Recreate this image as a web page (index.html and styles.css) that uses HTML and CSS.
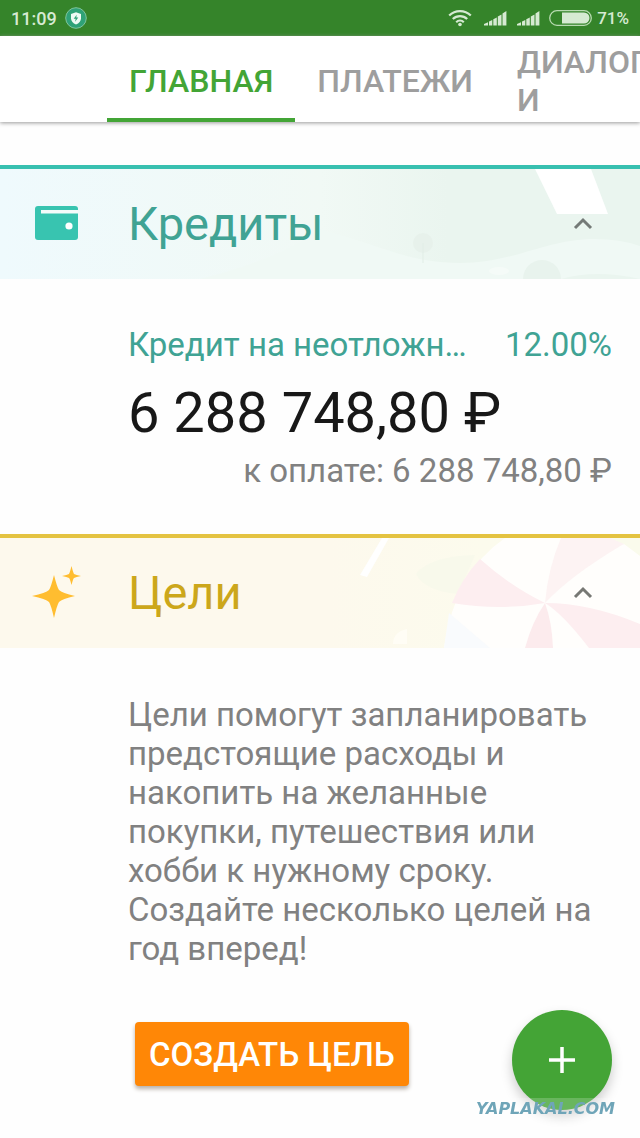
FILE: index.html
```html
<!DOCTYPE html>
<html lang="ru">
<head>
<meta charset="utf-8">
<meta name="viewport" content="width=device-width, initial-scale=1">
<title>Главная</title>
<link rel="stylesheet" href="styles.css">
</head>
<body>
<div class="status">
  <span class="time">11:09</span>
  <svg class="shield" width="22" height="22" viewBox="0 0 22 22" aria-hidden="true">
    <circle cx="11" cy="11" r="10.3" fill="#2fa277" stroke="#7fc39c"/>
    <path d="M11 5.2l5 1.8v4.2c0 3-2 5-5 6.2c-3-1.2-5-3.200-5-6.200V7z" fill="#effaf4"/>
    <path d="M11.700 7.800l-3 4h2l-.6 3l3.200-4.200h-2z" fill="#2fa277"/>
  </svg>
  <span class="spacer"></span>
  <svg class="wifi" width="24" height="18" viewBox="0 0 24 18" fill="none" stroke="#d6ead2" stroke-width="2.200" aria-hidden="true">
    <path d="M1.200 6.500a15.500 15.500 0 0 1 21.600 0M4.800 10a10.300 10.300 0 0 1 14.400 0M8.200 13.200a5.500 5.500 0 0 1 7.600 0"/>
    <circle cx="12" cy="15.500" r="1.800" fill="#d6ead2" stroke="none"/>
  </svg>
  <svg class="signal" width="23" height="16" viewBox="0 0 23 16" fill="#d6ead2" aria-hidden="true">
    <path d="M0 15.500V14l4-1.800v3.300zM5 15.500v-4l3.300-1.600v5.600zM9.300 15.500V9.300l3.500-1.800v8zM13.800 15.500V6.500l3.700-2v11zM18.500 15.500V3.500L22.400 1v14.500z"/>
  </svg>
  <svg class="signal" width="23" height="16" viewBox="0 0 23 16" fill="#d6ead2" aria-hidden="true">
    <path d="M0 15.500V14l4-1.800v3.300zM5 15.500v-4l3.300-1.600v5.600zM9.300 15.500V9.300l3.500-1.800v8zM13.800 15.500V6.500l3.700-2v11zM18.500 15.500V3.500L22.400 1v14.500z"/>
  </svg>
  <svg class="battery" width="43" height="16" viewBox="0 0 43 16" aria-hidden="true">
    <rect x=".7" y=".7" width="41.600" height="14.600" rx="7.300" fill="none" stroke="#b8dab1" stroke-width="1.300"/>
    <path d="M13 2.500h22a5.500 5.500 0 0 1 0 11H13z" fill="#d6ead2"/>
  </svg>
  <span class="percent">71%</span>
</div>

<nav class="tabs">
  <a class="tab active" href="#main">ГЛАВНАЯ</a>
  <a class="tab" href="#payments">ПЛАТЕЖИ</a>
  <a class="tab" href="#dialogs">ДИАЛОГ<br>И</a>
</nav>

<main id="main">
  <section>
    <header class="head credits">
      <svg class="art" width="640" height="110" viewBox="0 0 640 110" aria-hidden="true">
        <path d="M320 60C385 78 410 94 460 94C515 94 545 70 595 70Q620 70 640 77V110H200Q280 90 320 60z" fill="#f0f9f5"/>
        <path d="M535 0H591L608 45H557z" fill="#fff"/>
        <circle cx="423" cy="74" r="10" fill="#e7f1eb"/>
        <path d="M423 74v20" stroke="#e1ede6" stroke-width="1"/>
        <path d="M523 110a19 19 0 0 1 38 0z" fill="#e8f3ed"/>
        <path d="M561 110q35-10 79 0z" fill="#eaf5ef"/>
        <ellipse cx="499" cy="102" rx="10" ry="4" fill="#f5fbf8"/>
      </svg>
      <svg class="icon" width="54" height="54" viewBox="0 0 54 54" aria-hidden="true">
        <rect x="5" y="9" width="43" height="34" rx="3" fill="#38c4b0"/>
        <path d="M11 13h37v3.500H11z" fill="#f3fbfa"/>
        <circle cx="39" cy="29" r="3.600" fill="#fff"/>
      </svg>
      <h2 class="title">Кредиты</h2>
      <button class="toggle" aria-label="Свернуть кредиты" aria-expanded="true">
        <svg width="20" height="14" viewBox="0 0 20 14" fill="none" stroke="#747a77" stroke-width="3" aria-hidden="true"><path d="M2 11l8-8l8 8"/></svg>
      </button>
    </header>
    <div class="credit">
      <div class="row"><span>Кредит на неотложн…</span><span>12.00%</span></div>
      <div class="amount">6 288 748,80 ₽</div>
      <div class="due">к оплате: 6 288 748,80 ₽</div>
    </div>
  </section>

  <section>
    <header class="head goals">
      <svg class="art" width="640" height="110" viewBox="0 0 640 110" aria-hidden="true">
        <defs>
          <linearGradient id="sand"><stop offset="0" stop-color="#fdf9ed"/><stop offset=".5" stop-color="#fcfbed"/><stop offset="1" stop-color="#fbfbee"/></linearGradient>
        </defs>
        <path d="M330 0H640V110H330z" fill="url(#sand)"/>
        <path d="M382 0H389L367 39L360 37z" fill="#fff"/>
        <path d="M416 36Q430 18 475 17L458 56Q425 53 416 36z" fill="#f8f9eb"/>
        <path d="M393 106q0-12 14-15v15z" fill="#fffdf5"/>
        <path d="M505 0Q455 34 444 110H640V0z" fill="#fffefc"/>
        <path d="M480 21Q462 40 452 65Q500 73 545 65Q510 48 480 21z" fill="#fdeef0"/>
        <path d="M561 0H640L622 7Q570 38 545 65Q548 30 561 0z" fill="#fdf3f3"/>
        <path d="M640 18V0H610L624 6z" fill="#fafbec"/>
        <path d="M545 65Q590 65 640 86V110H589Q563 76 545 65z" fill="#fdeef0"/>
        <path d="M545 65Q532 84 525 110H553Q552 84 545 65z" fill="#fcebed"/>
        <path d="M449 75L490 110H444z" fill="#f9fbfd"/>
      </svg>
      <svg class="icon" width="54" height="54" viewBox="0 0 54 54" fill="#ffbd30" aria-hidden="true">
        <path d="M24 9Q27 21 29 24Q32 27 45 30Q32 33 29 36Q27 39 24 52Q21 39 19 36Q16 33 2 30Q16 27 19 24Q21 21 24 9z"/>
        <path d="M41.500 0Q43 6 44 8Q46 9 51 10Q46 11 44 12Q43 13 41.500 19Q40 13 39 12Q37 11 32 10Q37 9 39 8Q40 6 41.500 0z"/>
      </svg>
      <h2 class="title">Цели</h2>
      <button class="toggle" aria-label="Свернуть цели" aria-expanded="true">
        <svg width="20" height="14" viewBox="0 0 20 14" fill="none" stroke="#777874" stroke-width="3" aria-hidden="true"><path d="M2 11l8-8l8 8"/></svg>
      </button>
    </header>
    <div class="goal">
      <p class="copy">Цели помогут запланировать предстоящие расходы и накопить на желанные покупки, путешествия или хобби к нужному сроку. Создайте несколько целей на год вперед!</p>
      <button class="create">СОЗДАТЬ ЦЕЛЬ</button>
    </div>
  </section>
</main>

<button class="fab" aria-label="Добавить">
  <svg width="26" height="26" viewBox="0 0 26 26" stroke="#fff" stroke-width="3.500" aria-hidden="true"><path d="M13 0v26M0 13h26"/></svg>
</button>
<div class="watermark">YAPLAKAL.COM</div>
</body>
</html>
```

FILE: styles.css
```css
* { box-sizing: border-box; }

body {
  margin: 0;
  min-height: 100vh;
  overflow-x: hidden;
  background: #fefefe;
  color: #818181;
  font-family: Roboto, "Noto Sans", sans-serif;
  font-size: 33px;
  line-height: 39px;
}

button { border: 0; padding: 0; font: inherit; cursor: pointer; }

.status {
  display: flex;
  align-items: center;
  height: 36px;
  padding: 0 11px;
  background: #35842a;
  color: #d6ead2;
  font-size: 18px;
  font-weight: 500;
}
.shield { margin-left: 8px; }
.spacer { flex: 1; }
.wifi { margin-right: 2px; }
.signal { margin-left: 10px; }
.battery { margin-left: 9px; }
.percent { margin-left: 5px; font-size: 17px; }

.tabs {
  display: flex;
  height: 86px;
  padding-left: 107px;
  overflow: hidden;
  background: #fff;
  box-shadow: 0 1px 4px #999;
}
.tab {
  display: flex;
  flex: none;
  align-items: center;
  padding: 8px 22px 0;
  border-bottom: 4px solid transparent;
  color: #9e9e9e;
  font-size: 32px;
  font-weight: 500;
  line-height: 38px;
  text-decoration: none;
}
.tab.active { border-color: #43a536; color: #43a536; }

main { padding-top: 43px; }

.head {
  position: relative;
  display: flex;
  align-items: center;
  height: 114px;
  padding: 0 45px 0 30px;
  border-top: 4px solid;
  overflow: hidden;
}
.credits {
  border-color: #38c0b0;
  background: linear-gradient(90deg, #effafd, #f1f9f5 50%, #eaf5ef 70%);
  color: #40a394;
}
.goals { border-color: #e4c341; background: #fdf9ed; color: #cca71b; }
.art { position: absolute; top: 0; right: 0; }
.icon, .title, .toggle { position: relative; }
.title {
  flex: 1;
  margin: 0 0 0 44px;
  font-size: 47px;
  font-weight: 400;
  line-height: 56px;
}
.toggle { display: flex; padding: 2px; background: none; }

.credit { padding: 46px 28px 38px 128px; }
.row { display: flex; justify-content: space-between; color: #40a394; }
.amount { margin: 17px 0 1px; color: #181818; font-size: 56px; line-height: 64px; }
.due { text-align: right; line-height: 50px; }

.goal { padding: 47px 40px 50px 128px; }
.copy { margin: 0; }
.create {
  margin: 54px 0 0 7px;
  padding: 2px 14px 0;
  border-radius: 4px;
  background: #ff8706;
  box-shadow: 0 3px 4px #b8b0a8;
  color: #fff;
  font-weight: 500;
  line-height: 62px;
}

.fab {
  position: fixed;
  right: 28px;
  bottom: 28px;
  display: grid;
  place-items: center;
  width: 100px;
  height: 100px;
  border-radius: 50%;
  background: #44a436;
  box-shadow: 0 6px 12px #ccc;
}
.watermark {
  position: fixed;
  right: 25px;
  bottom: 18px;
  color: #6fa5b8;
  font-family: "DejaVu Sans", sans-serif;
  font-size: 16px;
  font-style: italic;
  font-weight: 700;
  line-height: 22px;
  background: rgba(255, 255, 255, .2);
}
```
